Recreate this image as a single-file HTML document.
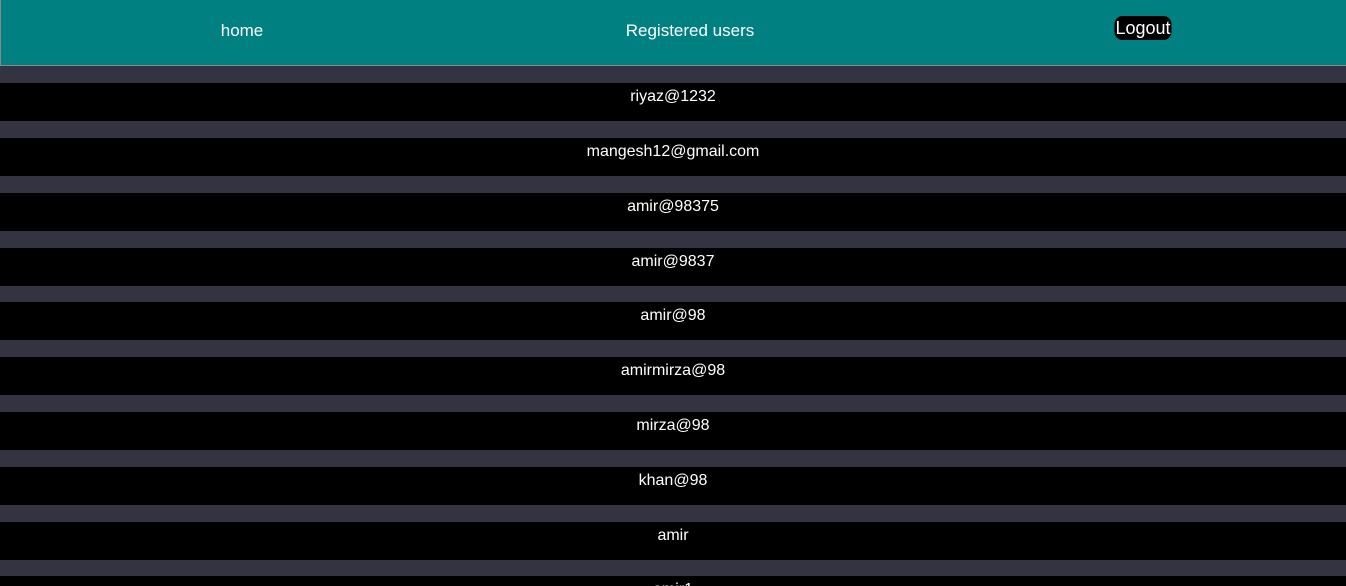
<!DOCTYPE html>
<html style="overflow:hidden;height:586px"><head><style>
body{margin:0;background:#333341;font-family:"Liberation Sans",sans-serif;color:#fff;width:1346px;height:586px;overflow:hidden;position:relative}
.hdr{position:absolute;left:0;top:0;width:1345px;height:65px;background:#008080;border-left:1px solid #888;border-bottom:1px solid #888}
.hdr span{position:absolute;top:21px;font-size:17px;transform:translateX(-50%);white-space:nowrap;line-height:20px}
.lo{background:#000;border-radius:8px;padding:2px 1px 2px;top:16px!important;font-size:18px!important}
.row{position:absolute;left:0;width:1346px;height:38px;background:#000;text-align:center;font-size:16px;line-height:28px}
</style></head><body>
<div class="hdr">
<span style="left:241px">home</span>
<span style="left:689px">Registered users</span>
<span class="lo" style="left:1142px">Logout</span>
</div>
<div class="row" style="top:83px">riyaz@1232</div>
<div class="row" style="top:138px">mangesh12@gmail.com</div>
<div class="row" style="top:193px">amir@98375</div>
<div class="row" style="top:248px">amir@9837</div>
<div class="row" style="top:302px">amir@98</div>
<div class="row" style="top:357px">amirmirza@98</div>
<div class="row" style="top:412px">mirza@98</div>
<div class="row" style="top:467px">khan@98</div>
<div class="row" style="top:522px">amir</div>
<div class="row" style="top:576px">amir1</div>
</body></html>
